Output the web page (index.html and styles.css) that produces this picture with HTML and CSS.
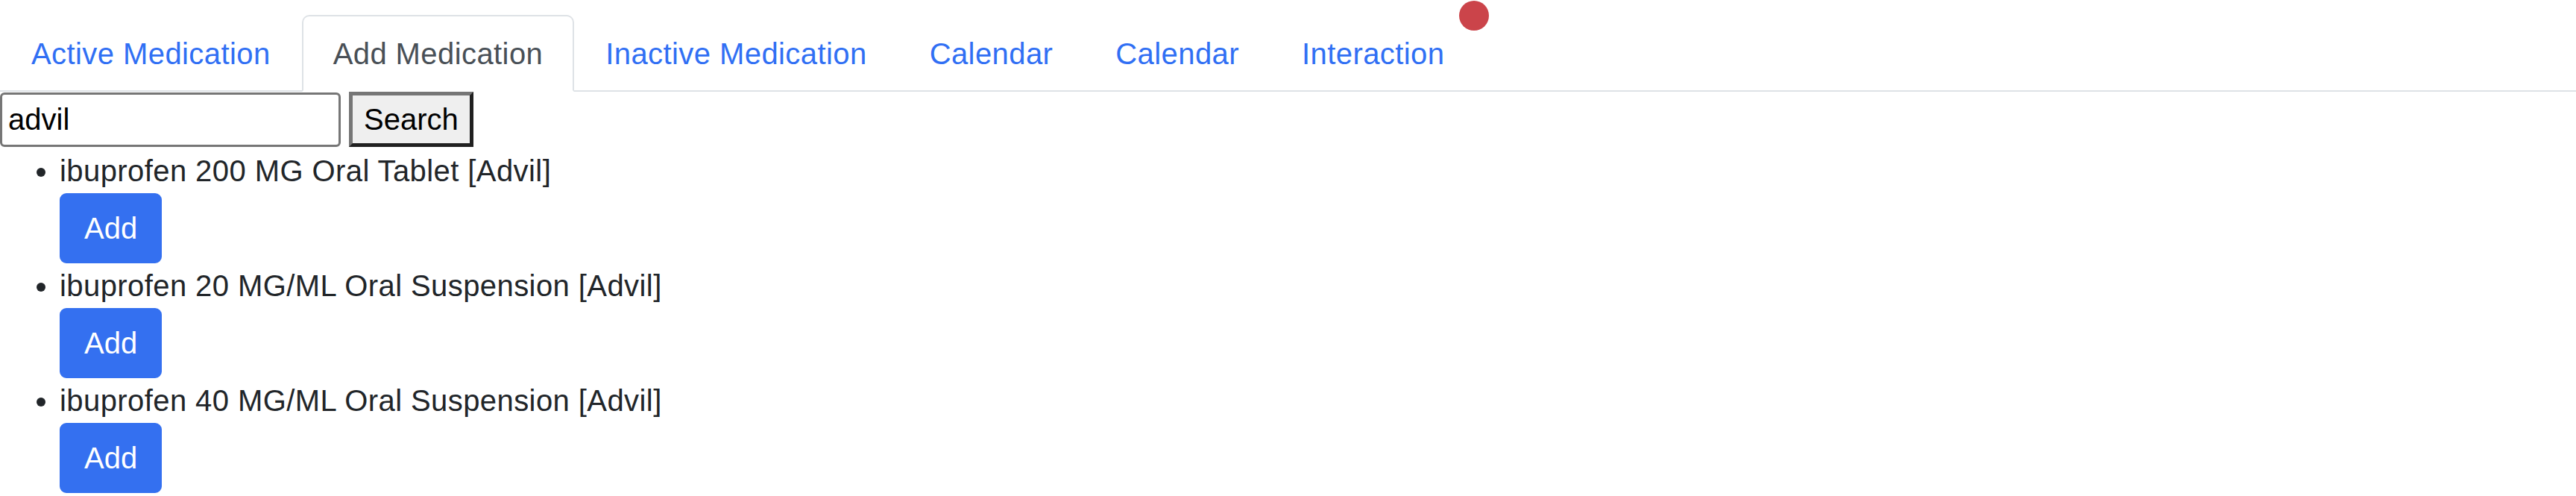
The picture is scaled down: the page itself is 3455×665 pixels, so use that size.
FILE: index.html
```html
<!DOCTYPE html>
<html lang="en">
<head>
<meta charset="utf-8">
<title>Add Medication</title>
<link rel="stylesheet" href="styles.css">
</head>
<body>
<nav class="tabs">
  <a class="tab" href="#">Active Medication</a>
  <a class="tab active" href="#">Add Medication</a>
  <a class="tab" href="#">Inactive Medication</a>
  <a class="tab" href="#">Calendar</a>
  <a class="tab" href="#">Calendar</a>
  <a class="tab" href="#">Interaction<span class="badge"></span></a>
</nav>
<form class="search">
  <input class="search-input" type="text" value="advil">
  <button class="search-btn" type="button">Search</button>
</form>
<ul class="results">
  <li>
    <div class="name">ibuprofen 200 MG Oral Tablet [Advil]</div>
    <button class="add" type="button">Add</button>
  </li>
  <li>
    <div class="name">ibuprofen 20 MG/ML Oral Suspension [Advil]</div>
    <button class="add" type="button">Add</button>
  </li>
  <li>
    <div class="name">ibuprofen 40 MG/ML Oral Suspension [Advil]</div>
    <button class="add" type="button">Add</button>
  </li>
</ul>
</body>
</html>
```

FILE: styles.css
```css
html, body {
  margin: 0;
  padding: 0;
  background: #ffffff;
}

body {
  font-family: "Liberation Sans", Arial, Helvetica, sans-serif;
  font-size: 40px;
  line-height: 60px;
  color: #212529;
}

.tabs {
  display: flex;
  margin-top: 20px;
  border-bottom: 2px solid #dee2e6;
}

.tab {
  position: relative;
  display: block;
  padding: 20px 40px 19px;
  margin-bottom: -2px;
  border: 2px solid transparent;
  border-radius: 10px 10px 0 0;
  color: #306ff4;
  text-decoration: none;
  line-height: 60px;
  letter-spacing: 0.42px;
}

.tab.active {
  color: #495057;
  background: #ffffff;
  border-color: #dee2e6 #dee2e6 #ffffff;
}

.badge {
  position: absolute;
  top: -1px;
  left: 100%;
  width: 40px;
  height: 40px;
  border-radius: 50%;
  background: #cb444a;
  transform: translate(-50%, -50%);
}

.search {
  display: flex;
  align-items: flex-end;
  gap: 11px;
  margin: 0;
}

.search-input {
  box-sizing: border-box;
  width: 457px;
  height: 73px;
  margin: 0;
  padding: 0 8px;
  border: 3px solid #767676;
  border-radius: 6px;
  font-family: "Liberation Sans", Arial, sans-serif;
  font-size: 40px;
  color: #000000;
  background: #ffffff;
  outline: none;
}

.search-btn {
  box-sizing: border-box;
  height: 74px;
  margin: 0;
  padding: 0 15px;
  border: 5px solid;
  border-color: #767676 #202020 #202020 #767676;
  border-radius: 0;
  background: #efefef;
  font-family: "Liberation Sans", Arial, sans-serif;
  font-size: 40px;
  line-height: 60px;
  color: #000000;
}

.results {
  margin: 2px 0 0;
  padding-left: 80px;
  list-style: disc;
}

.results li {
  line-height: 60px;
}

.name {
  line-height: 60px;
  letter-spacing: 0.42px;
}

.add {
  display: block;
  box-sizing: border-box;
  height: 94px;
  margin: 0;
  padding: 0 31px;
  border: 2px solid #3470f0;
  border-radius: 9px;
  background: #3470f0;
  color: #ffffff;
  font-family: "Liberation Sans", Arial, sans-serif;
  font-size: 40px;
  line-height: 60px;
}
```
